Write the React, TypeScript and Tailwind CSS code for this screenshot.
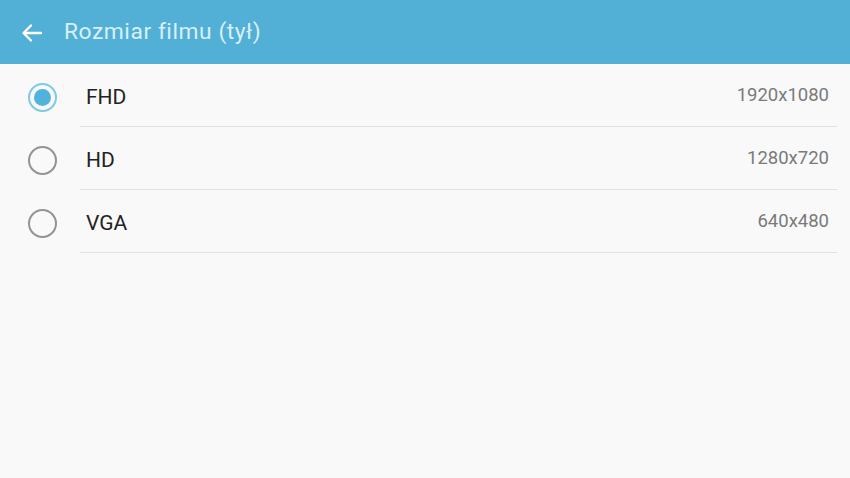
import React from "react";

const rows = [
  { label: "FHD", value: "1920x1080", selected: true },
  { label: "HD", value: "1280x720", selected: false },
  { label: "VGA", value: "640x480", selected: false },
];

export default function App() {
  return (
    <div
      className="w-[850px] h-[478px] bg-[#f9f9f9] flex flex-col overflow-hidden"
      style={{ fontFamily: "Roboto, 'Liberation Sans', sans-serif" }}
    >
      <div className="h-[64px] bg-[#52b0d6] flex items-center shrink-0">
        <div className="w-[64px] flex items-center pl-[20px] pt-[1px]">
          <svg width="24" height="24" viewBox="0 0 24 24" fill="none">
            <path
              d="M21 12H4M11 4.5L3.5 12L11 19.5"
              stroke="#ffffff"
              strokeWidth="2.4"
              strokeLinecap="round"
              strokeLinejoin="round"
            />
          </svg>
        </div>
        <span className="text-[22.8px] tracking-[0.55px] text-[#d9eff9] leading-none pt-[1px]">
          Rozmiar filmu (tył)
        </span>
      </div>
      <div className="flex flex-col">
        {rows.map((r) => (
          <div key={r.label} className="flex h-[63px]">
            <div className="w-[80px] flex items-center pl-[28px] pt-[3px]">
              {r.selected ? (
                <div className="w-[29px] h-[29px] rounded-full border-[2px] border-[#7cc9e8] flex items-center justify-center">
                  <div className="w-[17px] h-[17px] rounded-full bg-[#4fb3dc]" />
                </div>
              ) : (
                <div className="w-[29px] h-[29px] rounded-full border-[2px] border-[#939393]" />
              )}
            </div>
            <div className="flex-1 flex items-center justify-between border-b border-[#e2e2e2] mr-[13px]">
              <span className="text-[21px] text-[#222222] pl-[6px] pt-[6px]">{r.label}</span>
              <span className="text-[18.5px] text-[#7a7a7a] pr-[8px] pt-[2px]">{r.value}</span>
            </div>
          </div>
        ))}
      </div>
    </div>
  );
}
